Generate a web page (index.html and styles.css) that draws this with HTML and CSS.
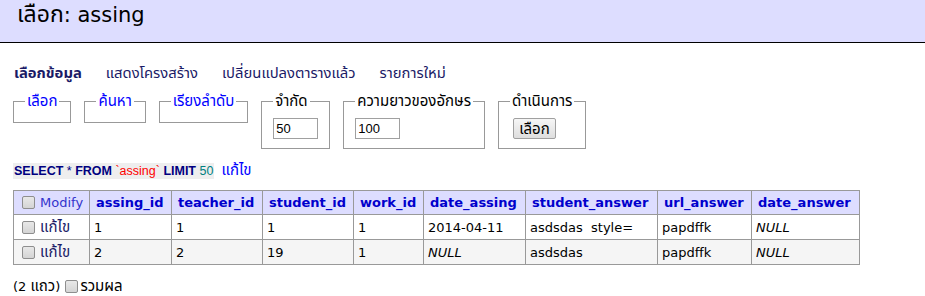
FILE: index.html
```html
<!DOCTYPE html>
<html lang="th">
<head>
<meta charset="utf-8">
<title>เลือก: assing</title>
<link rel="stylesheet" href="styles.css">
</head>
<body>
<h2 class="title"><span class="title-th">เลือก</span>: assing</h2>
<div class="content">
  <p class="links">
    <a class="nav active" href="#">เลือกข้อมูล</a>
    <a class="nav" href="#">แสดงโครงสร้าง</a>
    <a class="nav" href="#">เปลี่ยนแปลงตารางแล้ว</a>
    <a class="nav" href="#">รายการใหม่</a>
  </p>
  <form class="filters">
    <fieldset class="box empty"><legend><a class="leg-link" href="#">เลือก</a></legend></fieldset>
    <fieldset class="box empty"><legend><a class="leg-link" href="#">ค้นหา</a></legend></fieldset>
    <fieldset class="box empty"><legend><a class="leg-link" href="#">เรียงลำดับ</a></legend></fieldset>
    <fieldset class="box"><legend>จำกัด</legend><input class="num" type="text" value="50"></fieldset>
    <fieldset class="box"><legend>ความยาวของอักษร</legend><input class="num" type="text" value="100"></fieldset>
    <fieldset class="box"><legend>ดำเนินการ</legend><button class="btn" type="button">เลือก</button></fieldset>
  </form>
  <p class="sql"><code class="jush"><b>SELECT</b> * <b>FROM</b> <span class="ident">`assing`</span> <b>LIMIT</b> <span class="number">50</span></code><a class="edit-link th" href="#">แก้ไข</a></p>
  <table class="data">
    <colgroup>
      <col class="c-mod"><col class="c-aid"><col class="c-tid"><col class="c-sid"><col class="c-wid"><col class="c-da"><col class="c-sa"><col class="c-url"><col class="c-dan">
    </colgroup>
    <thead>
      <tr>
        <td class="mod-head"><input class="chk" type="checkbox"><span class="mod-label">Modify</span></td>
        <th>assing_id</th>
        <th>teacher_id</th>
        <th>student_id</th>
        <th>work_id</th>
        <th>date_assing</th>
        <th>student_answer</th>
        <th>url_answer</th>
        <th>date_answer</th>
      </tr>
    </thead>
    <tbody>
      <tr>
        <td class="mod"><input class="chk" type="checkbox"><a class="row-edit th" href="#">แก้ไข</a></td>
        <td>1</td>
        <td>1</td>
        <td>1</td>
        <td>1</td>
        <td>2014-04-11</td>
        <td>asdsdas&nbsp; style=</td>
        <td>papdffk</td>
        <td><i>NULL</i></td>
      </tr>
      <tr class="odd">
        <td class="mod"><input class="chk" type="checkbox"><a class="row-edit th" href="#">แก้ไข</a></td>
        <td>2</td>
        <td>2</td>
        <td>19</td>
        <td>1</td>
        <td><i>NULL</i></td>
        <td>asdsdas</td>
        <td>papdffk</td>
        <td><i>NULL</i></td>
      </tr>
    </tbody>
  </table>
  <p class="count">(2 <span class="th">แถว</span>) <label class="sum"><input class="chk sum-chk" type="checkbox"><span class="th">รวมผล</span></label></p>
</div>
</body>
</html>
```

FILE: styles.css
```css
html, body {
  margin: 0;
  padding: 0;
  background: #fff;
}
body {
  font-family: "DejaVu Sans", Tahoma, "Noto Sans Thai", Loma, Garuda, sans-serif;
  font-size: 13px;
  line-height: 1.25;
  color: #000;
}
a {
  text-decoration: none;
}
.th {
  font-size: 15px;
  line-height: 16px;
}
.title {
  margin: 0;
  box-sizing: border-box;
  height: 43px;
  padding: 0 0 0 17px;
  background: #ddf;
  border-bottom: 1px solid #000;
  font-size: 21px;
  font-weight: normal;
  line-height: 28px;
}
.title-th {
  font-size: 23px;
}
.content {
  padding: 0 13px;
}
.links {
  margin: 20px 0 0 1px;
  display: flex;
  gap: 24px;
  font-size: 14.8px;
  line-height: 19px;
}
.nav {
  color: #1a1a66;
}
.nav.active {
  font-weight: bold;
}
.filters {
  display: flex;
  align-items: flex-start;
  gap: 13px;
  margin: 10px 0 0;
}
.box {
  margin: 0;
  padding: 6px 11px 6px;
  border: 1px solid #999;
  min-width: 0;
}
.box legend {
  padding: 0 2px;
  font-size: 15px;
  line-height: 18px;
}
.leg-link {
  color: #00f;
}
.num {
  display: block;
  margin: 2px 0 3px;
  width: 45px;
  height: 21px;
  box-sizing: border-box;
  border: 1px solid #a0a0a0;
  padding: 1px 2px;
  font-family: "Liberation Sans", Arial, sans-serif;
  font-size: 13px;
}
.btn {
  display: block;
  margin: 2px 0 3px 3px;
  width: 43px;
  height: 21px;
  padding: 0;
  border: 1px solid #a0a0a0;
  border-radius: 2px;
  background: linear-gradient(#f6f6f6, #dedede);
  font-family: inherit;
  font-size: 15px;
  line-height: 18px;
  color: #000;
}
.sql {
  margin: 13px 0 0;
  display: flex;
  align-items: baseline;
  gap: 7px;
  line-height: 16px;
}
.jush {
  background: #eee;
  font-family: "Liberation Sans Narrow", "Arial Narrow", "Liberation Sans", sans-serif;
  font-stretch: condensed;
  font-size: 12.5px;
  color: #000080;
  padding: 0 1px;
}
.jush b {
  color: #000080;
}
.ident {
  color: #f00;
}
.number {
  color: #008080;
}
.edit-link {
  color: #00f;
}
.data {
  margin-top: 11px;
  border-collapse: collapse;
  table-layout: fixed;
  width: 846px;
  border: 1px solid #999;
}
.c-mod { width: 76px; }
.c-aid { width: 82px; }
.c-tid { width: 91px; }
.c-sid { width: 91px; }
.c-wid { width: 70px; }
.c-da { width: 102px; }
.c-sa { width: 132px; }
.c-url { width: 94px; }
.c-dan { width: 108px; }
.data th,
.data td {
  border: 1px solid #999;
  padding: 4px 4px 3px;
  text-align: left;
  white-space: nowrap;
  vertical-align: middle;
  line-height: 16px;
  height: 16px;
}
.data thead th,
.data thead td {
  background: #ddf;
}
.data th {
  color: #00c;
  font-weight: bold;
  padding-left: 6px;
}
.data tr.odd td {
  background: #f5f5f5;
}
.chk {
  appearance: none;
  -webkit-appearance: none;
  box-sizing: border-box;
  width: 13px;
  height: 13px;
  margin: 0 4px 0 4px;
  vertical-align: -2px;
  border: 1px solid #8e8e8e;
  border-radius: 2px;
  background: linear-gradient(#e8e8e8, #d4d4d4);
}
.mod-label {
  color: #33c;
  margin-left: 1px;
}
.row-edit {
  color: #1a1a66;
  margin-left: 1px;
}
.count {
  margin: 13px 0 0;
  line-height: 16px;
}
.sum-chk {
  margin: 0 2px 0 1px;
}
```
